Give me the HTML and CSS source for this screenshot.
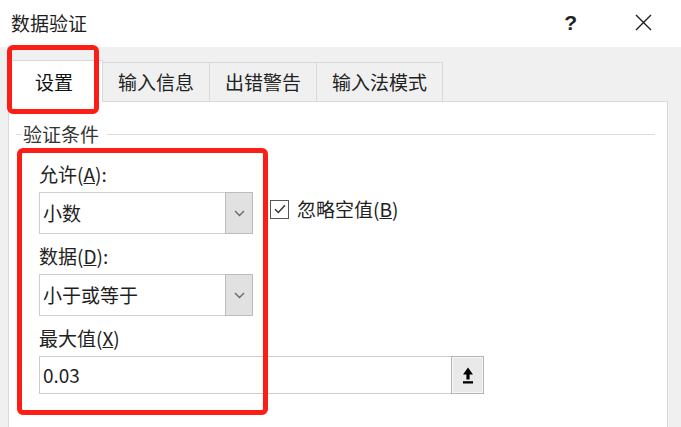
FILE: index.html
```html
<!DOCTYPE html>
<html lang="zh-CN">
<head>
<meta charset="utf-8">
<title>数据验证</title>
<link rel="stylesheet" href="styles.css">
</head>
<body>
<div class="dialog">
  <header class="titlebar">
    <span class="title">数据验证</span>
    <div class="title-actions">
      <span class="help">?</span>
      <svg class="close" width="17" height="17" viewBox="0 0 17 17"><path d="M1 1 L16 16 M16 1 L1 16" stroke="#1e1e1e" stroke-width="1.4" fill="none"/></svg>
    </div>
  </header>
  <nav class="tabs">
    <div class="tab active">设置</div>
    <div class="tab">输入信息</div>
    <div class="tab">出错警告</div>
    <div class="tab">输入法模式</div>
  </nav>
  <section class="panel">
    <div class="group">
      <div class="group-head"><span class="group-title">验证条件</span></div>
      <div class="group-body">
        <div class="field-label">允许(<u>A</u>):</div>
        <div class="row">
          <div class="select">
            <span class="select-value">小数</span>
            <span class="select-btn"><svg width="11" height="7" viewBox="0 0 11 7"><path d="M1 1 L5.5 5.5 L10 1" stroke="#666" stroke-width="1.3" fill="none"/></svg></span>
          </div>
          <label class="check">
            <span class="box"><svg width="16" height="16" viewBox="0 0 16 16"><path d="M3 8.2 L6.3 11.5 L13 4.2" stroke="#333" stroke-width="1.4" fill="none"/></svg></span>
            <span>忽略空值(<u>B</u>)</span>
          </label>
        </div>
        <div class="field-label gap">数据(<u>D</u>):</div>
        <div class="row">
          <div class="select">
            <span class="select-value">小于或等于</span>
            <span class="select-btn"><svg width="11" height="7" viewBox="0 0 11 7"><path d="M1 1 L5.5 5.5 L10 1" stroke="#666" stroke-width="1.3" fill="none"/></svg></span>
          </div>
        </div>
        <div class="field-label gap">最大值(<u>X</u>)</div>
        <div class="input">
          <span class="input-value">0.03</span>
          <span class="input-btn"><svg width="12" height="17" viewBox="0 0 12 17"><path d="M6 0.5 L11 7.5 L7.6 7.5 L7.6 12.5 L4.4 12.5 L4.4 7.5 L1 7.5 Z" fill="#000"/><rect x="1" y="14.2" width="10" height="2.3" fill="#000"/></svg></span>
        </div>
      </div>
    </div>
  </section>
  <div class="mark mark-tab"></div>
  <div class="mark mark-fields"></div>
</div>
</body>
</html>
```
FILE: styles.css
```css
html, body {
  margin: 0;
  padding: 0;
}
body {
  width: 681px;
  height: 427px;
  overflow: hidden;
  background: #f0f0f0;
  font-family: "Noto Sans CJK SC", "Noto Sans", sans-serif;
  color: #1e1e1e;
}
.dialog {
  position: relative;
  width: 681px;
  height: 427px;
  overflow: hidden;
}
.titlebar {
  height: 47px;
  background: #fff;
  display: flex;
  align-items: center;
  padding: 0 29px 2px 11px;
  box-sizing: border-box;
}
.title {
  font-size: 19px;
  line-height: 24px;
}
.title-actions {
  margin-left: auto;
  display: flex;
  align-items: center;
}
.help {
  font-family: "Liberation Sans", sans-serif;
  font-size: 21px;
  font-weight: bold;
  line-height: 24px;
  margin-right: 58px;
  color: #222;
}
.close {
  display: block;
}
.tabs {
  height: 54px;
  display: flex;
  align-items: flex-end;
  padding-left: 10px;
  box-sizing: border-box;
}
.tab {
  height: 39px;
  box-sizing: border-box;
  padding: 0 15px;
  font-size: 19px;
  line-height: 37px;
  border-top: 1px solid #d9d9d9;
  border-right: 1px solid #d9d9d9;
  color: #222;
}
.tab.active {
  height: 42px;
  margin-bottom: -1px;
  line-height: 42px;
  padding: 0 29px 0 24px;
  border-left: 1px solid #d9d9d9;
  background: #fff;
  position: relative;
  z-index: 1;
  color: #111;
}
.panel {
  margin-left: 8px;
  width: 660px;
  height: 340px;
  box-sizing: border-box;
  border: 1px solid #d9d9d9;
  background: #fff;
  padding: 20px 0 0 7px;
}
.group {
  width: 639px;
}
.group-head {
  display: flex;
  align-items: center;
  height: 24px;
}
.group-head::before {
  content: "";
  width: 6px;
  height: 1px;
  background: #dcdcdc;
}
.group-head::after {
  content: "";
  flex: 1;
  height: 1px;
  background: #dcdcdc;
}
.group-title {
  font-size: 19px;
  line-height: 24px;
  margin: 0 8px 0 1px;
  color: #333;
}
.group-body {
  padding: 16px 0 0 23px;
}
.field-label {
  font-size: 19px;
  line-height: 24px;
  height: 24px;
  color: #222;
}
.field-label.gap {
  margin-top: 10px;
}
.row {
  display: flex;
  align-items: flex-start;
  margin-top: 6px;
}
.select {
  width: 214px;
  height: 42px;
  box-sizing: border-box;
  border: 1px solid #cfcfcf;
  display: flex;
  background: #fff;
}
.select-value {
  flex: 1;
  padding-left: 3px;
  font-size: 19px;
  line-height: 40px;
  color: #1e1e1e;
}
.select-btn {
  width: 26px;
  margin: -1px -1px -1px 0;
  border: 1px solid #bcbcbc;
  background: #e1e1e1;
  display: flex;
  align-items: center;
  justify-content: center;
}
.check {
  display: flex;
  align-items: center;
  margin: 6px 0 0 17px;
  font-size: 19px;
  line-height: 22px;
  color: #222;
  gap: 8px;
}
.box {
  width: 19px;
  height: 19px;
  box-sizing: border-box;
  border: 1px solid #555;
  display: flex;
  align-items: center;
  justify-content: center;
  background: #fff;
}
.box svg {
  display: block;
}
.input {
  margin-top: 6px;
  width: 445px;
  height: 38px;
  box-sizing: border-box;
  border: 1px solid #cccccc;
  display: flex;
}
.input-value {
  flex: 1;
  padding-left: 3px;
  font-size: 19px;
  line-height: 36px;
  color: #1e1e1e;
}
.input-btn {
  width: 31px;
  margin: -1px -1px -1px 0;
  border: 1px solid #b4b4b4;
  box-shadow: inset 0 0 0 1px #f7f7f7;
  background: #e9e9e9;
  display: flex;
  align-items: center;
  justify-content: center;
}
.mark {
  position: absolute;
  box-sizing: border-box;
  border: 5px solid #fb1d16;
  border-radius: 6px;
  z-index: 5;
}
.mark-tab {
  left: 7px;
  top: 45px;
  width: 92px;
  height: 69px;
}
.mark-fields {
  left: 17px;
  top: 148px;
  width: 251px;
  height: 267px;
}
```
